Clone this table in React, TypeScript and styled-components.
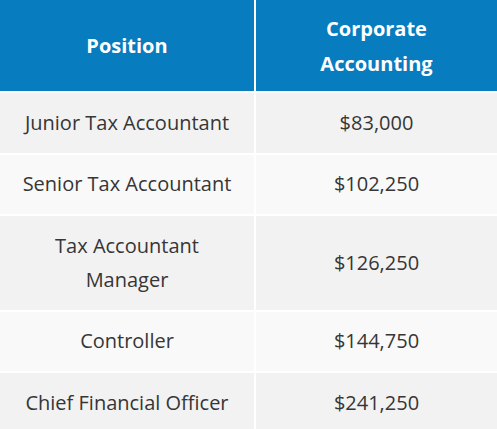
import React from "react";
import styled, { createGlobalStyle } from "styled-components";

const Global = createGlobalStyle`
  html, body { margin: 0; padding: 0; background: #ffffff; }
  body { font-family: "Open Sans", "Liberation Sans", sans-serif; }
`;

const Table = styled.div`
  display: grid;
  grid-template-columns: 254px 1fr;
  column-gap: 2px;
  row-gap: 2px;
  width: 497px;
  background: #ffffff;
`;

const HeadCell = styled.div`
  background: #077cbf;
  color: #ffffff;
  font-weight: 700;
  font-size: 20px;
  line-height: 35px;
  text-align: center;
  display: flex;
  align-items: center;
  justify-content: center;
  height: 91px;
  padding: 0 20px;
  box-sizing: border-box;
`;

const Cell = styled.div<{ $alt: boolean }>`
  background: ${(p) => (p.$alt ? "#f9f9f9" : "#f2f2f2")};
  color: #363636;
  font-size: 20px;
  line-height: 34px;
  text-align: center;
  display: flex;
  align-items: center;
  justify-content: center;
  padding: 12.75px 20px;
  box-sizing: border-box;
`;

const rows = [
  ["Junior Tax Accountant", "$83,000"],
  ["Senior Tax Accountant", "$102,250"],
  ["Tax Accountant Manager", "$126,250"],
  ["Controller", "$144,750"],
  ["Chief Financial Officer", "$241,250"],
];

export default function App() {
  return (
    <>
      <Global />
      <Table>
        <HeadCell>Position</HeadCell>
        <HeadCell>Corporate Accounting</HeadCell>
        {rows.map(([pos, pay], i) => (
          <React.Fragment key={pos}>
            <Cell $alt={i % 2 === 1}>{pos}</Cell>
            <Cell $alt={i % 2 === 1}>{pay}</Cell>
          </React.Fragment>
        ))}
      </Table>
    </>
  );
}
